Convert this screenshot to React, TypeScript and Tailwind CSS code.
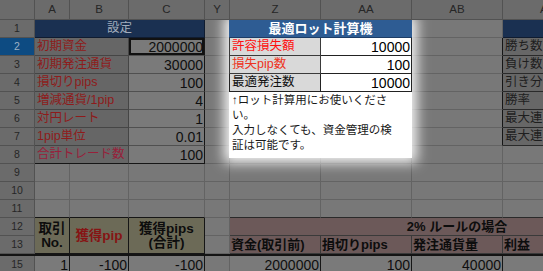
import React from "react";

type P = { className?: string; children?: React.ReactNode };

const Cell = ({ className = "", children }: P) => (
  <div
    className={
      "flex items-center overflow-hidden whitespace-nowrap border-r border-b leading-none " +
      className
    }
  >
    {children}
  </div>
);

const H = ({ className = "", children }: P) => (
  <Cell
    className={
      "justify-center bg-[#6b6b6b] border-[#525252] text-[11.5px] text-[#262626] " +
      className
    }
  >
    {children}
  </Cell>
);

const RH = ({ n, sel = false }: { n: string; sel?: boolean }) => (
  <Cell
    className={
      "justify-center border-[#525252] text-[10.5px] " +
      (sel ? "bg-[#0d4b82] text-[#9db0c4]" : "bg-[#6b6b6b] text-[#262626]")
    }
  >
    {n}
  </Cell>
);

const Plain = ({ className = "" }: P) => (
  <Cell className={"bg-[#787878] border-[#636363] " + className} />
);

const labels = ["初期資金", "初期発注通貨", "損切りpips", "増減通貨/1pip", "対円レート", "1pip単位", "合計トレード数"];
const values = ["2000000", "30000", "100", "4", "1", "0.01", "100"];
const acLabels = ["勝ち数", "負け数", "引き分", "勝率", "最大連", "最大連", ""];

export default function App() {
  return (
    <div className="relative w-[543px] h-[271px] overflow-hidden bg-[#787878] font-['Liberation_Sans','Noto_Sans_CJK_JP',sans-serif]">
      <div className="grid w-[685px] grid-cols-[35px_35px_59px_76px_25px_91px_91px_91px_91px_91px] grid-rows-[20px_repeat(13,18px)_2px_18px]">
        {/* column headers */}
        <H />
        <H>A</H>
        <H>B</H>
        <H className="bg-[#0d4b82] text-[#9db0c4]">C</H>
        <H>Y</H>
        <H>Z</H>
        <H>AA</H>
        <H>AB</H>
        <H>AC</H>
        <H>AD</H>

        {/* row 1 */}
        <RH n="1" />
        <Cell className="col-span-3 justify-center bg-[#1a3051] border-[#101c30] text-[12.5px] text-[#a2adbd]">設定</Cell>
        <Plain />
        <Plain />
        <Plain />
        <Plain />
        <Cell className="bg-[#1a3051] border-[#101c30]" />
        <Plain />

        {/* rows 2-8 */}
        {labels.map((l, i) => (
          <React.Fragment key={l + i}>
            <RH n={String(i + 2)} sel={i === 0} />
            <Cell
              className={
                "col-span-2 pl-[2px] bg-[#666666] border-[#454545] text-[12.5px] " +
                (i === 6 ? "border-b-[#161616] text-[#98203a]" : "text-[#8e1b1b]")
              }
            >
              {l}
            </Cell>
            <Cell
              className={
                "justify-end pr-[1px] bg-[#7a7a7a] border-[#505050] border-r-[#161616] text-[14px] text-[#0f0f0f] " +
                (i === 6 ? "border-b-[#161616] " : "") +
                (i === 0 ? "shadow-[inset_0_0_0_2px_#111]" : "")
              }
            >
              {values[i]}
            </Cell>
            <Plain />
            <Plain />
            <Plain />
            <Plain className={i < 6 ? "border-r-[#161616]" : ""} />
            {i < 6 ? (
              <Cell className="pl-[2px] bg-[#676767] border-[#2a2a2a] text-[12.5px] text-[#1e1e1e]">{acLabels[i]}</Cell>
            ) : (
              <Plain />
            )}
            <Plain />
          </React.Fragment>
        ))}

        {/* rows 9-11 */}
        {["9", "10", "11"].map((n) => (
          <React.Fragment key={n}>
            <RH n={n} />
            <Plain className={n === "11" ? "border-b-[#161616]" : ""} />
            <Plain className={n === "11" ? "border-b-[#161616]" : ""} />
            <Plain className={n === "11" ? "border-b-[#161616]" : ""} />
            <Plain />
            <Plain className={n === "11" ? "border-b-[#2a2a2a]" : ""} />
            <Plain className={n === "11" ? "border-b-[#2a2a2a]" : ""} />
            <Plain className={n === "11" ? "border-b-[#2a2a2a]" : ""} />
            <Plain className={n === "11" ? "border-b-[#2a2a2a]" : ""} />
            <Plain className={n === "11" ? "border-b-[#2a2a2a]" : ""} />
          </React.Fragment>
        ))}

        {/* row 12 */}
        <RH n="12" />
        <Cell className="row-span-2 flex-col justify-center bg-[#6c6a57] border-[#161616] text-[13.5px] leading-[17px] font-bold text-[#0d0d0d]">
          <span>取引</span>
          <span>No.</span>
        </Cell>
        <Cell className="row-span-2 justify-center bg-[#6c6a57] border-[#161616] text-[13.5px] font-bold text-[#861414]">
          獲得pip
        </Cell>
        <Cell className="row-span-2 flex-col justify-center bg-[#6c6a57] border-[#161616] text-[13.5px] leading-[17px] font-bold text-[#0d0d0d]">
          <span>獲得pips</span>
          <span>(合計)</span>
        </Cell>
        <Plain />
        <Cell className="col-span-5 justify-center bg-[#6c5959] border-[#3a3a3a] text-[13px] font-bold text-[#0d0d0d]">
          2% ルールの場合
        </Cell>

        {/* row 13 */}
        <RH n="13" />
        <Plain />
        <Cell className="pl-[1px] bg-[#6c5959] border-[#3a3a3a] text-[13px] font-bold text-[#0d0d0d]">資金(取引前)</Cell>
        <Cell className="pl-[1px] bg-[#6c5959] border-[#3a3a3a] text-[13px] font-bold text-[#0d0d0d]">損切りpips</Cell>
        <Cell className="pl-[1px] bg-[#6c5959] border-[#3a3a3a] text-[13px] font-bold text-[#0d0d0d]">発注通貨量</Cell>
        <Cell className="pl-[1px] bg-[#6c5959] border-[#3a3a3a] text-[13px] font-bold text-[#0d0d0d]">利益</Cell>
        <Cell className="pl-[1px] bg-[#6c5959] border-[#3a3a3a]" />

        {/* hidden row 14 line */}
        <div className="col-span-10 bg-[#141414]" />

        {/* row 15 */}
        <RH n="15" />
        <Cell className="justify-end pr-[1px] bg-[#7a7a7a] border-[#161616] text-[14px] text-[#0f0f0f]">1</Cell>
        <Cell className="justify-end pr-[1px] bg-[#7a7a7a] border-[#161616] text-[14px] text-[#0f0f0f]">-100</Cell>
        <Cell className="justify-end pr-[1px] bg-[#7a7a7a] border-[#161616] text-[14px] text-[#0f0f0f]">-100</Cell>
        <Plain />
        <Cell className="justify-end pr-[1px] bg-[#7a7a7a] border-[#161616] text-[14px] text-[#0f0f0f]">2000000</Cell>
        <Cell className="justify-end pr-[1px] bg-[#7a7a7a] border-[#161616] text-[14px] text-[#0f0f0f]">100</Cell>
        <Cell className="justify-end pr-[1px] bg-[#7a7a7a] border-[#161616] text-[14px] text-[#0f0f0f]">40000</Cell>
        <Cell className="bg-[#7a7a7a] border-[#161616]" />
        <Cell className="bg-[#7a7a7a] border-[#161616]" />
      </div>

      {/* spotlight overlay */}
      <div className="absolute left-[190px] top-[20px] w-[260px] h-[160px] overflow-hidden pointer-events-none">
        <div className="ml-[39px] w-[183px] bg-white shadow-[0_0_12px_5px_rgba(255,255,255,0.92)]">
          <div className="grid grid-cols-[92px_91px] grid-rows-[18px_18px_18px_18px]">
            <div className="col-span-2 flex items-center justify-center bg-[#2e5c93] border-b border-[#1d3d66] text-[13px] font-bold text-white leading-none">
              最適ロット計算機
            </div>
            <div className="flex items-center pl-[2px] bg-[#d9d9d9] border-l border-r border-b border-[#3a3a3a] text-[12.5px] text-[#ff1010] leading-none">
              許容損失額
            </div>
            <div className="flex items-center justify-end pr-[1px] bg-white border-r border-b border-[#222] text-[14px] text-black leading-none">
              10000
            </div>
            <div className="flex items-center pl-[2px] bg-[#d9d9d9] border-l border-r border-b border-[#3a3a3a] text-[12.5px] text-[#ee3322] leading-none">
              損失pip数
            </div>
            <div className="flex items-center justify-end pr-[1px] bg-white border-r border-b border-[#222] text-[14px] text-black leading-none">
              100
            </div>
            <div className="flex items-center pl-[2px] bg-[#d9d9d9] border-l border-r border-b border-[#222] text-[12.5px] text-[#111] leading-none">
              最適発注数
            </div>
            <div className="flex items-center justify-end pr-[1px] bg-white border-r border-b border-[#222] text-[14px] text-black leading-none">
              10000
            </div>
          </div>
          <div className="h-[66px] pl-[3px] pt-[1px] text-[11.5px] leading-[15px] text-[#1a1a1a] whitespace-nowrap">
            <div>↑ロット計算用にお使いくださ</div>
            <div>い。</div>
            <div>入力しなくても、資金管理の検</div>
            <div>証は可能です。</div>
          </div>
        </div>
      </div>
    </div>
  );
}
